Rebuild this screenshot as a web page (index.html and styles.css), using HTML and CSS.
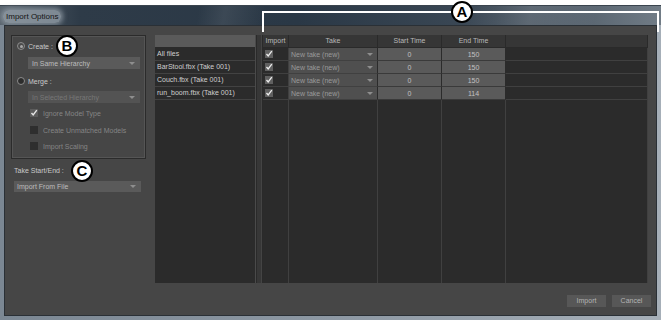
FILE: index.html
```html
<!DOCTYPE html>
<html>
	<head>
		<link rel="stylesheet" href="styles.css">
	</head>
	<body>
		<div class="window">
			<div class="titlebar"><span class="title">Import Options</span></div>
			<div class="frame">
				<div class="content">
					<div class="main">

						<!-- left options column -->
						<div class="options">
							<div class="group">
								<div class="radio-row first">
									<span class="radio checked"></span>
									<span class="label">Create :</span>
								</div>
								<div class="dropdown indent gap-a">
									<span>In Same Hierarchy</span><i class="arrow"></i>
								</div>
								<div class="radio-row gap-b">
									<span class="radio"></span>
									<span class="label">Merge :</span>
								</div>
								<div class="dropdown indent disabled gap-c">
									<span>In Selected Hierarchy</span><i class="arrow"></i>
								</div>
								<div class="check-row gap-c">
									<span class="check on">
										<svg width="8" height="8" viewBox="0 0 8 8"><polyline points="1.5,4 3.2,6 6.8,1.2" fill="none" stroke="#e6e6e6" stroke-width="1.4"/></svg>
									</span>
									<span class="label muted">Ignore Model Type</span>
								</div>
								<div class="check-row gap-b">
									<span class="check"></span>
									<span class="label muted">Create Unmatched Models</span>
								</div>
								<div class="check-row gap-d">
									<span class="check"></span>
									<span class="label muted">Import Scaling</span>
								</div>
							</div>
							<div class="take-label">Take Start/End :</div>
							<div class="dropdown wide">
								<span>Import From File</span><i class="arrow"></i>
							</div>
						</div>

						<!-- file list -->
						<div class="files">
							<div class="files-head"></div>
							<div class="file-row">All files</div>
							<div class="file-row">BarStool.fbx (Take 001)</div>
							<div class="file-row">Couch.fbx (Take 001)</div>
							<div class="file-row">run_boom.fbx (Take 001)</div>
						</div>

						<div class="splitter"></div>

						<!-- takes table -->
						<div class="takes">
							<div class="th">Import</div>
							<div class="th">Take</div>
							<div class="th">Start Time</div>
							<div class="th">End Time</div>
							<div class="th"></div>

							<div class="td"><span class="tick"><svg width="8" height="8" viewBox="0 0 8 8"><polyline points="1.5,4 3.2,6 6.8,1.2" fill="none" stroke="#eeeeee" stroke-width="1.3"/></svg></span></div>
							<div class="td take">New take (new)<i class="arrow"></i></div>
							<div class="td num">0</div>
							<div class="td num">150</div>
							<div class="td"></div>

							<div class="td"><span class="tick"><svg width="8" height="8" viewBox="0 0 8 8"><polyline points="1.5,4 3.2,6 6.8,1.2" fill="none" stroke="#eeeeee" stroke-width="1.3"/></svg></span></div>
							<div class="td take">New take (new)<i class="arrow"></i></div>
							<div class="td num">0</div>
							<div class="td num">150</div>
							<div class="td"></div>

							<div class="td"><span class="tick"><svg width="8" height="8" viewBox="0 0 8 8"><polyline points="1.5,4 3.2,6 6.8,1.2" fill="none" stroke="#eeeeee" stroke-width="1.3"/></svg></span></div>
							<div class="td take">New take (new)<i class="arrow"></i></div>
							<div class="td num">0</div>
							<div class="td num">150</div>
							<div class="td"></div>

							<div class="td"><span class="tick"><svg width="8" height="8" viewBox="0 0 8 8"><polyline points="1.5,4 3.2,6 6.8,1.2" fill="none" stroke="#eeeeee" stroke-width="1.3"/></svg></span></div>
							<div class="td take">New take (new)<i class="arrow"></i></div>
							<div class="td num">0</div>
							<div class="td num">114</div>
							<div class="td"></div>

							<div class="tf"></div>
							<div class="tf"></div>
							<div class="tf"></div>
							<div class="tf"></div>
							<div class="tf"></div>
						</div>
					</div>

					<div class="buttons">
						<div class="button">Import</div>
						<div class="button">Cancel</div>
					</div>
				</div>
			</div>
		</div>

		<!-- annotation callouts -->
		<div class="bracket"></div>
		<div class="callout callout-a">A</div>
		<div class="callout callout-b">B</div>
		<div class="callout callout-c">C</div>
	</body>
</html>
```

FILE: styles.css
```css
html {
  box-sizing: border-box;
}

*, *:before, *:after {
  box-sizing: inherit;
}

body {
  margin: 0;
  padding: 0;
  background: #ffffff;
  font-family: 'Liberation Sans', Arial, sans-serif;
  font-size: 7px;
  width: 662px;
  height: 322px;
  overflow: hidden;
  position: relative;
}

.window {
  margin-top: 5px;
  width: 661px;
  display: flex;
  flex-direction: column;
}

.titlebar {
  height: 20px;
  padding-left: 3px;
  display: flex;
  align-items: center;
  border-top: 1px solid #3a444e;
  background:
    linear-gradient(100deg, transparent 30%, rgba(255,255,255,0.08) 34%, transparent 40%, transparent 70%, rgba(255,255,255,0.12) 80%, transparent 90%),
    linear-gradient(90deg, #59646e 0%, #2e3b48 12%, #2a3846 45%, #3d4a57 75%, #717c86 100%);
}

.title {
  font-size: 8px;
  color: #141414;
  padding: 2px 3px;
  margin-top: 2px;
  border-radius: 6px;
  background: rgba(150,160,170,0.75);
  box-shadow: 0 0 5px 2px rgba(150,160,170,0.75);
}

.frame {
  padding: 0 4px 4px 4px;
  background: linear-gradient(90deg, #7b8793, #8d98a3 50%, #a6afb8);
}

.content {
  height: 291px;
  background: #464646;
  border: 1px solid #2a3036;
  display: flex;
  flex-direction: column;
}

.main {
  display: flex;
  padding: 9px 0 0 6px;
  height: 258px;
}

/* left column */
.options {
  width: 135px;
  display: flex;
  flex-direction: column;
}

.group {
  height: 124px;
  border: 1px solid #2b2b2b;
  box-shadow: inset 0 0 0 1px #555555;
  display: flex;
  flex-direction: column;
}

.radio-row, .check-row {
  height: 10px;
  display: flex;
  align-items: center;
}

.radio-row {
  padding-left: 5px;
}

.radio-row.first {
  margin-top: 5px;
}

.check-row {
  padding-left: 18px;
}

.gap-a { margin-top: 6px; }
.gap-b { margin-top: 7px; }
.gap-c { margin-top: 5px; }
.gap-d { margin-top: 6px; }

.radio {
  width: 8px;
  height: 8px;
  border-radius: 50%;
  background: #2c2c2c;
  border: 1px solid #8c8c8c;
  margin-right: 3px;
  display: flex;
  align-items: center;
  justify-content: center;
}

.radio.checked {
  background: #4a4a4a;
}

.radio.checked:after {
  content: '';
  width: 3px;
  height: 3px;
  border-radius: 50%;
  background: #a8a8a8;
}

.label {
  color: #c9c9c9;
}

.label.muted {
  color: #858585;
}

.check {
  width: 8px;
  height: 8px;
  background: #2e2e2e;
  margin-right: 5px;
  display: flex;
}

.check.on {
  background: #5c5c5c;
}

.dropdown {
  height: 12px;
  background: #5a5a5a;
  color: #bdbdbd;
  padding-left: 4px;
  display: flex;
  align-items: center;
  justify-content: space-between;
  padding-right: 5px;
}

.dropdown.indent {
  margin-left: 16px;
  margin-right: 5px;
}

.dropdown.disabled {
  background: #535353;
  color: #777777;
}

.dropdown.wide {
  margin-left: 3px;
  margin-right: 5px;
  height: 11px;
  padding-left: 3px;
}

.arrow {
  width: 0;
  height: 0;
  border-left: 3px solid transparent;
  border-right: 3px solid transparent;
  border-top: 3px solid #8e8e8e;
}

.take-label {
  margin: 7px 0 0 3px;
  height: 10px;
  line-height: 10px;
  color: #c9c9c9;
  margin-bottom: 5px;
}

/* file list */
.files {
  width: 101px;
  margin-left: 9px;
  background: #2b2b2b;
  border-right: 1px solid #4a4a4a;
  height: 248px;
}

.files-head {
  height: 13px;
  background: #5a5a5a;
  border-bottom: 1px solid #2b2b2b;
}

.file-row {
  height: 13px;
  line-height: 12px;
  padding-left: 2px;
  color: #cfcfcf;
  border-bottom: 1px solid #424242;
  white-space: nowrap;
}

.splitter {
  width: 7px;
  height: 248px;
  background: #373737;
  border-left: 1px solid #2a2a2a;
  border-right: 1px solid #2a2a2a;
  box-shadow: inset -1px 0 0 #444444;
}

/* takes table */
.takes {
  width: 385px;
  height: 248px;
  display: grid;
  grid-template-columns: 26px 89px 64px 64px 142px;
  grid-template-rows: 13px 13px 13px 13px 13px 1fr;
  background: #2b2b2b;
}

.th {
  background: #363636;
  color: #b9b9b9;
  text-align: center;
  line-height: 12px;
  border-right: 1px solid #2a2a2a;
  border-bottom: 1px solid #2a2a2a;
}

.td {
  border-right: 1px solid #404040;
  border-bottom: 1px solid #404040;
  display: flex;
  align-items: center;
}

.td.take {
  background: #4f4f4f;
  color: #9a9a9a;
  padding: 0 4px 0 2px;
  justify-content: space-between;
  border-right-color: #2b2b2b;
}

.td.num {
  background: #5a5a5a;
  color: #c2c2c2;
  justify-content: center;
  border-right-color: #2b2b2b;
  border-bottom-color: #3a3a3a;
}

.tick {
  width: 8px;
  height: 8px;
  margin-left: 2px;
  background: #606060;
  display: flex;
}

.tf {
  border-right: 1px solid #404040;
}

.buttons {
  display: flex;
  justify-content: flex-end;
  gap: 6px;
  padding: 11px 5px 0 0;
}

.button {
  width: 39px;
  height: 12px;
  background: #575757;
  color: #b4b4b4;
  text-align: center;
  line-height: 12px;
}

/* annotations laid over the screenshot */
.bracket {
  position: absolute;
  left: 262px;
  top: 11px;
  width: 397px;
  height: 21px;
  border: 2px solid #ffffff;
  border-bottom: none;
}

.callout {
  position: absolute;
  width: 22px;
  height: 22px;
  border-radius: 50%;
  background: #ffffff;
  border: 2px solid #000000;
  color: #000000;
  font-weight: bold;
  font-size: 15px;
  line-height: 18px;
  text-align: center;
}

.callout-a {
  left: 451px;
  top: 1px;
}

.callout-b {
  left: 56px;
  top: 35px;
}

.callout-c {
  left: 71px;
  top: 160px;
}
```
